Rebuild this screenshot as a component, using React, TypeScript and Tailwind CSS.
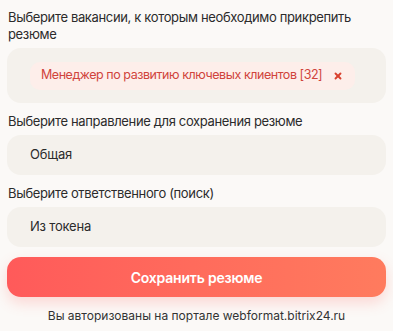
import { X } from 'lucide-react';

const App = () => {
    return (
        <div className="min-h-[331px] bg-[#fbf9f7] px-[7px] pt-[9px] text-[#2b2b2b]" style={{ fontFamily: 'Inter, "Noto Sans", sans-serif' }}>
            <label className="block text-[13px] leading-[17px] tracking-[-0.35px] px-px">
                Выберите вакансии, к которым необходимо прикрепить резюме
            </label>
            <div className="mt-[5px] h-[55px] rounded-[14px] bg-[#f4f1ec] flex items-center pl-[23px]">
                <div className="h-[28px] rounded-[10px] bg-[#fdeeea] flex items-center pl-[11px] pr-[12px] gap-[11px] whitespace-nowrap">
                    <span className="text-[12.5px] tracking-[-0.45px] text-[#d0443c]">Менеджер по развитию ключевых клиентов [32]</span>
                    <X className="w-[10px] h-[10px] text-[#d9412f]" strokeWidth={4.5} />
                </div>
            </div>

            <label className="block mt-[10px] text-[13px] leading-[17px] tracking-[-0.35px] px-px">
                Выберите направление для сохранения резюме
            </label>
            <div className="mt-[5px] h-[40px] rounded-[14px] bg-[#f4f1ec] flex items-center pl-[23px] text-[13px] tracking-[-0.2px]">
                Общая
            </div>

            <label className="block mt-[10px] text-[13px] leading-[17px] tracking-[-0.35px] px-px">
                Выберите ответственного (поиск)
            </label>
            <div className="mt-[5px] h-[40px] rounded-[14px] bg-[#f4f1ec] flex items-center pl-[23px] text-[13px] tracking-[-0.2px]">
                Из токена
            </div>

            <button className="mt-[10px] w-full h-[40px] rounded-[14px] bg-gradient-to-r from-[#ff5a5a] to-[#ff7b5e] text-white font-semibold text-[14px] tracking-[-0.2px] shadow-[0_6px_14px_rgba(255,100,90,0.22)]">
                Сохранить резюме
            </button>

            <p className="mt-[11px] text-center text-[12px] leading-[16px] text-[#333]">
                Вы авторизованы на портале webformat.bitrix24.ru
            </p>
        </div>
    );
};

export default App;
